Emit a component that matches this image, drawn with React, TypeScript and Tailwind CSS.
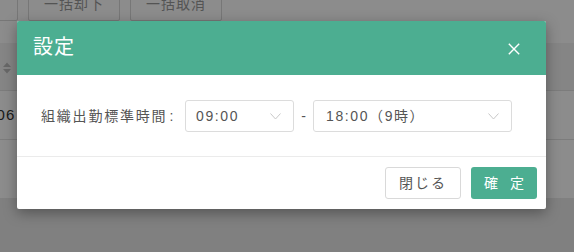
export default function App() {
  const font = { fontFamily: '"Liberation Sans", "Noto Sans CJK JP", sans-serif' };
  return (
    <div className="relative w-[574px] h-[252px] overflow-hidden bg-[#e9e9e9]" style={font}>
      {/* underlying page */}
      <div className="bg-white h-[198px] flex flex-col">
        <div className="h-[43px] flex items-start gap-[10px] ml-[-58px]">
          <div className="mt-[-12px] h-[33px] w-[76px] border border-[#d9d9d9] rounded-[2px] flex items-center justify-center text-[14px] tracking-[1px] text-[#999]">確認</div>
          <div className="mt-[-12px] h-[33px] w-[92px] border border-[#d9d9d9] rounded-[2px] flex items-center justify-center text-[14px] tracking-[1px] text-[#999]">一括却下</div>
          <div className="mt-[-12px] h-[33px] w-[92px] border border-[#d9d9d9] rounded-[2px] flex items-center justify-center text-[14px] tracking-[1px] text-[#999]">一括取消</div>
        </div>
        <div className="h-[48px] bg-[#f3f3f3] border-b border-[#e2e2e2] flex items-center pl-[2px] pt-[2px]">
          <svg width="10" height="16" viewBox="0 0 10 16">
            <path d="M1 7 L5 2.5 L9 7 Z" fill="#bdbdbd" />
            <path d="M1 9 L5 13.5 L9 9 Z" fill="#bdbdbd" />
          </svg>
        </div>
        <div className="h-[49px] border-b border-[#e2e2e2] flex items-center ml-[-46px]">
          <span className="text-[15px] tracking-[1px] text-[#333]">2020/06</span>
        </div>
      </div>

      {/* overlay */}
      <div className="absolute inset-0 bg-black/45" />

      {/* modal */}
      <div className="absolute left-[17px] top-[21px] w-[529px] bg-white rounded-[2px] shadow-[0_4px_14px_rgba(0,0,0,0.35)] overflow-hidden">
        <div className="h-[54px] bg-[#4cae91] flex items-center justify-between pl-[16px] pr-[26px]">
          <span className="text-[20px] text-white tracking-[1px] mt-[-2px]">設定</span>
          <svg width="12" height="12" viewBox="0 0 12 12" className="mt-[1px]">
            <path d="M0.8 0.8 L11.2 11.2 M11.2 0.8 L0.8 11.2" stroke="#fff" strokeWidth="1.4" fill="none" />
          </svg>
        </div>
        <div className="pt-[25px] pb-[24px] pl-[24px] flex items-center border-b border-[#ebebeb]">
          <span className="text-[14px] tracking-[1.8px] text-[#555] w-[144px] whitespace-nowrap">組織出勤標準時間<span className="ml-[2px]">:</span></span>
          <div className="w-[109px] h-[32px] border border-[#dcdcdc] rounded-[3px] flex items-center justify-between pl-[10px] pr-[12px]">
            <span className="text-[14px] tracking-[1.6px] text-[#555]">09:00</span>
            <svg width="11" height="7" viewBox="0 0 11 7">
              <path d="M0.5 0.5 L5.5 6 L10.5 0.5" stroke="#c8c8c8" strokeWidth="1" fill="none" />
            </svg>
          </div>
          <span className="w-[19px] text-center text-[14px] text-[#555]">-</span>
          <div className="w-[199px] h-[32px] border border-[#dcdcdc] rounded-[3px] flex items-center justify-between pl-[12px] pr-[12px]">
            <span className="text-[14px] tracking-[1.6px] text-[#555]">18:00（9時）</span>
            <svg width="11" height="7" viewBox="0 0 11 7">
              <path d="M0.5 0.5 L5.5 6 L10.5 0.5" stroke="#c8c8c8" strokeWidth="1" fill="none" />
            </svg>
          </div>
        </div>
        <div className="h-[52px] flex items-center justify-end gap-[10px] pr-[9px]">
          <button className="w-[76px] h-[32px] border border-[#d9d9d9] rounded-[3px] bg-white text-[14px] tracking-[2px] text-[#555] flex items-center justify-center">閉じる</button>
          <button className="w-[66px] h-[32px] rounded-[3px] bg-[#4cae91] text-[14px] text-white flex items-center justify-center tracking-[4px] pl-[4px]">確 定</button>
        </div>
      </div>
    </div>
  );
}
